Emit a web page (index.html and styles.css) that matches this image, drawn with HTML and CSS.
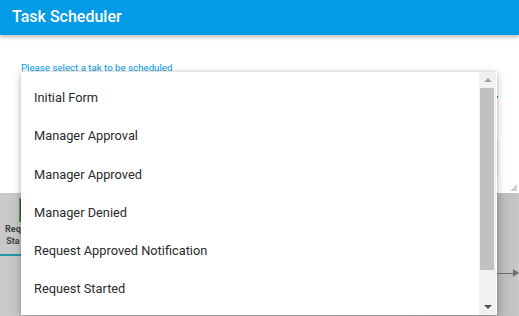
FILE: index.html
```html
<!DOCTYPE html>
<html>
<head>
<meta charset="utf-8">
<link rel="stylesheet" href="styles.css">
</head>
<body>
<div class="page">
  <header class="header"><h1 class="title">Task Scheduler</h1></header>
  <section class="dialog">
    <div class="label">Please select a tak to be scheduled</div>
    <div class="underline"></div>
    <div class="textarea"></div>
    <div class="resize"></div>
  </section>
  <section class="canvas">
    <div class="node-green"></div>
    <div class="node-label">Req<br>Sta</div>
    <div class="teal-line"></div>
    <div class="arrow"><span class="arrow-line"></span><span class="arrow-head"></span></div>
  </section>
  <div class="menu">
    <ul class="options">
      <li class="option">Initial Form</li>
      <li class="option">Manager Approval</li>
      <li class="option">Manager Approved</li>
      <li class="option">Manager Denied</li>
      <li class="option">Request Approved Notification</li>
      <li class="option">Request Started</li>
    </ul>
    <div class="scrollbar">
      <div class="sb-btn"><span class="tri-up"></span></div>
      <div class="sb-track"><div class="sb-thumb"></div></div>
      <div class="sb-btn"><span class="tri-down"></span></div>
    </div>
  </div>
</div>
</body>
</html>
```

FILE: styles.css
```css
* { box-sizing: border-box; }
html, body { margin: 0; padding: 0; }
body {
  width: 519px;
  height: 316px;
  overflow: hidden;
  font-family: Roboto, "Liberation Sans", Arial, sans-serif;
  background: #fff;
}
.page {
  position: relative;
  width: 519px;
  height: 316px;
  display: flex;
  flex-direction: column;
}
.header {
  height: 35px;
  background: #039be5;
  display: flex;
  align-items: center;
  padding-left: 12px;
  box-shadow: 0 2px 4px rgba(0,0,0,0.28);
  position: relative;
  z-index: 2;
}
.title {
  margin: 0;
  color: #fff;
  font-size: 16px;
  font-weight: 500;
  letter-spacing: 0;
  margin-top: -2px;
}
.dialog {
  position: relative;
  height: 158px;
  background: #fff;
  padding: 27px 0 0 21px;
}
.label {
  color: #039be5;
  font-size: 9.7px;
  line-height: 12px;
}
.underline {
  position: absolute;
  left: 21px;
  top: 61px;
  width: 477px;
  height: 2px;
  background: #039be5;
}
.textarea {
  position: absolute;
  left: 21px;
  top: 104px;
  width: 477px;
  height: 38px;
  border-right: 1px solid #e4e4e4;
}
.resize {
  position: absolute;
  right: 2px;
  bottom: 2px;
  width: 0;
  height: 0;
  border-left: 7px solid transparent;
  border-bottom: 7px solid #cfcfcf;
}
.canvas {
  position: relative;
  flex: 1;
  background: linear-gradient(90deg, #c9c9c9 0%, #c2c2c2 10%, #bdbdbd 60%, #b4b4b4 95%, #c8c8c8 100%);
}
.node-green {
  position: absolute;
  left: 19px;
  top: 5px;
  width: 14px;
  height: 24px;
  background: #2f6a2a;
  border: 1px solid #6c8d66;
}
.node-label {
  position: absolute;
  left: 5px;
  top: 30px;
  font-size: 9px;
  font-weight: 700;
  line-height: 12px;
  color: #444;
  text-align: center;
}
.teal-line {
  position: absolute;
  left: 0;
  top: 61px;
  width: 30px;
  height: 2px;
  background: #2596a8;
}
.arrow {
  position: absolute;
  left: 495px;
  top: 75px;
  width: 24px;
  height: 10px;
  display: flex;
  align-items: center;
}
.arrow-line {
  flex: 1;
  height: 1px;
  background: #6f6f6f;
}
.arrow-head {
  width: 0;
  height: 0;
  border-top: 4px solid transparent;
  border-bottom: 4px solid transparent;
  border-left: 6px solid #6f6f6f;
}
.menu {
  position: absolute;
  left: 21px;
  top: 72px;
  width: 476px;
  height: 243px;
  background: #fff;
  display: flex;
  box-shadow: 0 2px 8px rgba(0,0,0,0.25), 0 0 3px rgba(0,0,0,0.12);
  z-index: 5;
}
.options {
  list-style: none;
  margin: 0;
  padding: 7px 0 0;
  flex: 1;
  overflow: hidden;
}
.option {
  height: 38.3px;
  line-height: 38.3px;
  padding-left: 13px;
  font-size: 12.8px;
  color: #2b2b2b;
  white-space: nowrap;
}
.scrollbar {
  width: 17px;
  margin-right: 1px;
  background: #f1f1f1;
  display: flex;
  flex-direction: column;
}
.sb-btn {
  height: 16px;
  display: flex;
  align-items: center;
  justify-content: center;
}
.sb-track {
  flex: 1;
  padding: 0 2px 0 1px;
}
.sb-thumb {
  height: 182px;
  background: #c1c1c1;
}
.tri-up {
  width: 0; height: 0;
  border-left: 4px solid transparent;
  border-right: 4px solid transparent;
  border-bottom: 4px solid #a3a3a3;
}
.tri-down {
  width: 0; height: 0;
  border-left: 4px solid transparent;
  border-right: 4px solid transparent;
  border-top: 4px solid #505050;
}
```
